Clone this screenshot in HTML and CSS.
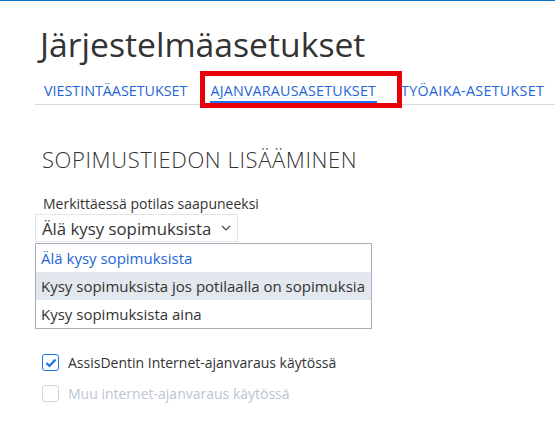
FILE: index.html
```html
<!DOCTYPE html>
<html lang="fi">

<head>
    <meta charset="UTF-8">
    <meta name="viewport" content="width=device-width, initial-scale=1.0">
    <title>Järjestelmäasetukset</title>
    <link rel="stylesheet" href="styles.css">
</head>

<body>
    <div class="page">
        <h1>Järjestelmäasetukset</h1>

        <nav class="tabs">
            <a class="tab">VIESTINTÄASETUKSET</a>
            <a class="tab active">AJANVARAUSASETUKSET</a>
            <a class="tab">TYÖAIKA-ASETUKSET</a>
        </nav>

        <section class="section">
            <h2>SOPIMUSTIEDON LISÄÄMINEN</h2>

            <label class="field-label">Merkittäessä potilas saapuneeksi</label>
            <div class="select">
                <span>Älä kysy sopimuksista</span>
                <svg class="chevron" width="10" height="6" viewBox="0 0 10 6">
                    <path d="M1 1l4 4 4-4" fill="none" stroke="#444" stroke-width="1.2" />
                </svg>
            </div>
            <ul class="options">
                <li class="selected">Älä kysy sopimuksista</li>
                <li class="hover">Kysy sopimuksista jos potilaalla on sopimuksia</li>
                <li>Kysy sopimuksista aina</li>
            </ul>

            <div class="checks">
                <label class="check">
                    <span class="box checked">
                        <svg width="12" height="10" viewBox="0 0 12 10">
                            <path d="M1.5 5l3 3 6-6.5" fill="none" stroke="#1a73e8" stroke-width="2.2" />
                        </svg>
                    </span>
                    AssisDentin Internet-ajanvaraus käytössä
                </label>
                <label class="check disabled">
                    <span class="box"></span>
                    Muu internet-ajanvaraus käytössä
                </label>
            </div>
        </section>
    </div>
</body>

</html>
```

FILE: styles.css
```css
body {
    font-family: 'Open Sans', 'Noto Sans', sans-serif;
    margin: 0;
    padding: 0;
    background-color: #fff;
    color: #333;
    border-top: 1px solid #0078d4;
}

.page {
    padding-left: 35px;
}

h1 {
    margin: 0;
    padding: 22px 0 0 5px;
    font-size: 33.7px;
    font-weight: 400;
    line-height: 42px;
    color: #333;
}

.tabs {
    display: flex;
    gap: 23px;
    margin-top: 16px;
    padding-left: 9px;
    border-bottom: 1px solid #d4dbe5;
}

.tab {
    position: relative;
    font-size: 14.3px;
    line-height: 20px;
    padding-bottom: 3px;
    color: #1f66d6;
    white-space: nowrap;
}

.tab.active {
    letter-spacing: 0.2px;
}

.tab:last-child {
    margin-left: 2px;
    letter-spacing: 0.3px;
}

.tab.active::after {
    content: "";
    position: absolute;
    left: 0;
    right: -1px;
    bottom: 1px;
    height: 2px;
    background-color: #1a73e8;
}

/* red frame drawn round the current tab */
.tab.active::before {
    content: "";
    position: absolute;
    left: -10px;
    right: -26px;
    top: -10px;
    bottom: -4px;
    border: 5px solid #e8000b;
}

.section {
    padding-top: 40px;
}

h2 {
    margin: 0 0 0 7px;
    font-size: 22px;
    font-weight: 300;
    line-height: 28px;
    letter-spacing: 0.6px;
    color: #333;
}

.field-label {
    display: block;
    margin: 21px 0 0 8px;
    font-size: 14px;
    line-height: 20px;
    color: #333;
}

.select {
    display: inline-flex;
    align-items: center;
    gap: 10px;
    height: 24px;
    padding: 2px 6px 0 6px;
    border: 1px solid #e2e5ea;
    font-size: 16.8px;
    line-height: 24px;
}

.chevron {
    margin-top: -2px;
}

.options {
    list-style: none;
    margin: 1px 0 0;
    padding: 0;
    width: 335px;
    border: 1px solid #a8b0bc;
}

.options li {
    height: 28px;
    line-height: 28px;
    padding-left: 5px;
    font-size: 15px;
    color: #333;
}

.options li.selected {
    color: #1f66d6;
}

.options li.hover {
    background-color: #e3e8ee;
}

.checks {
    margin-top: 25px;
    padding-left: 7px;
}

.check {
    display: flex;
    align-items: center;
    gap: 9px;
    height: 17px;
    margin-bottom: 14px;
    font-size: 14px;
    color: #333;
}

.box {
    display: inline-flex;
    align-items: center;
    justify-content: center;
    box-sizing: border-box;
    width: 17px;
    height: 17px;
    border: 1.5px solid #cdd6e2;
    border-radius: 3px;
}

.box.checked {
    border-color: #1a73e8;
}

.check.disabled {
    color: #bcc6d3;
}
```
